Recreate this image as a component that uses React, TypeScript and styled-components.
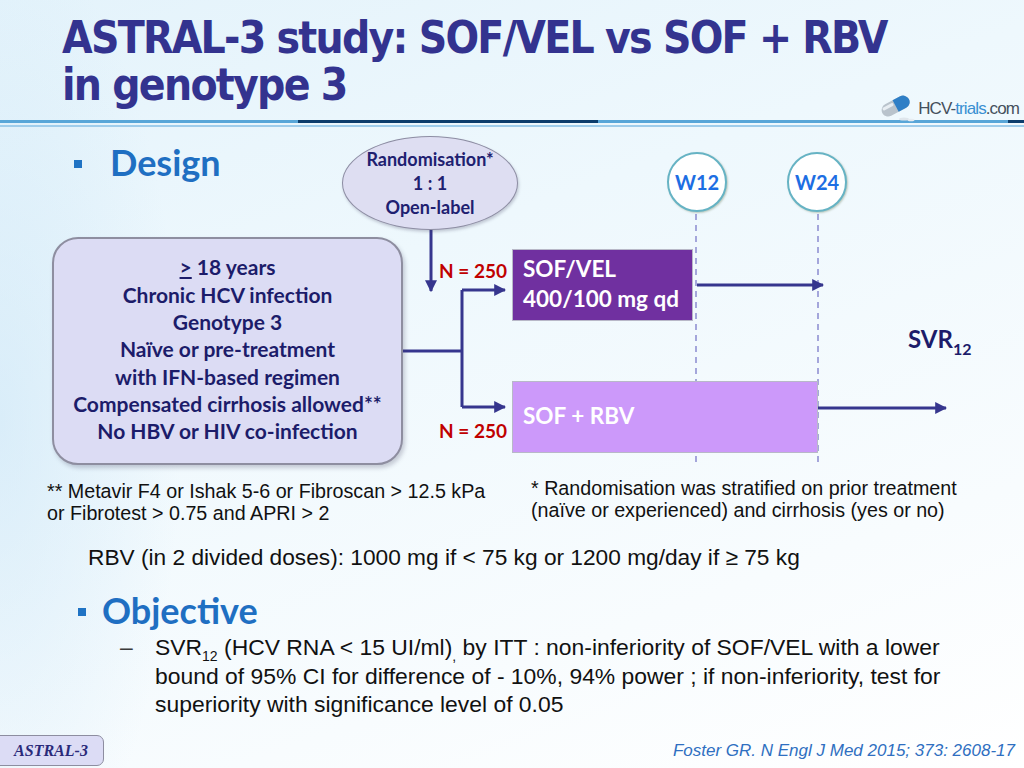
import styled, { createGlobalStyle } from 'styled-components';

const GlobalStyle = createGlobalStyle`
  html, body {
    margin: 0;
    padding: 0;
    background: #ffffff;
  }
`;

const NAVY = '#33338f';
const LINE = '#36368e';

const App = () => {
    return (
        <>
            <GlobalStyle />
            <Slide>
                <Header>
                    <Title>
                        ASTRAL-3 study: SOF/VEL vs SOF + RBV
                        <br />
                        in genotype 3
                    </Title>
                    <Rule>
                        <RuleTop />
                        <RuleBottom />
                    </Rule>
                    <Logo>
                        <PillIcon />
                        <LogoText>
                            HCV-<LogoAccent>trials</LogoAccent>.com
                        </LogoText>
                    </Logo>
                </Header>

                <DesignCanvas>
                    <SectionHeading>
                        <Bullet />
                        Design
                    </SectionHeading>

                    <Connectors />

                    <Ellipse>
                        <span>Randomisation*</span>
                        <span>1 : 1</span>
                        <span>Open-label</span>
                    </Ellipse>

                    <WeekMark $left={667}>W12</WeekMark>
                    <WeekMark $left={787}>W24</WeekMark>

                    <Criteria>
                        <span><u>&gt;</u> 18 years</span>
                        <span>Chronic HCV infection</span>
                        <span>Genotype 3</span>
                        <span>Naïve or pre-treatment</span>
                        <span>with IFN-based regimen</span>
                        <span>Compensated cirrhosis allowed**</span>
                        <span>No HBV or HIV co-infection</span>
                    </Criteria>

                    <Count $top={133}>N = 250</Count>
                    <Count $top={293}>N = 250</Count>

                    <Arm $top={122} $width={181} $color="#7030a0">
                        <span>SOF/VEL</span>
                        <span>400/100 mg qd</span>
                    </Arm>
                    <Arm $top={254} $width={306} $color="#cc99fa">
                        <span>SOF + RBV</span>
                    </Arm>

                    <Outcome>
                        SVR<sub>12</sub>
                    </Outcome>
                </DesignCanvas>

                <Notes>
                    <Note $left={47} $shift={0}>
                        ** Metavir F4 or Ishak 5-6 or Fibroscan &gt; 12.5 kPa
                        <br />
                        or Fibrotest &gt; 0.75 and APRI &gt; 2
                    </Note>
                    <Note $left={531} $shift={-3}>
                        * Randomisation was stratified on prior treatment
                        <br />
                        (naïve or experienced) and cirrhosis (yes or no)
                    </Note>
                </Notes>

                <Dosing>RBV (in 2 divided doses): 1000 mg if &lt; 75 kg or 1200 mg/day if ≥ 75 kg</Dosing>

                <ObjectiveHeading>
                    <Bullet />
                    Objective
                </ObjectiveHeading>

                <DashList>
                    <DashItem>
                        SVR<sub>12</sub> (HCV RNA &lt; 15 UI/ml)<sub>,</sub> by ITT : non-inferiority of SOF/VEL with a lower
                        <br />
                        bound of 95% CI for difference of - 10%, 94% power ; if non-inferiority, test for
                        <br />
                        superiority with significance level of 0.05
                    </DashItem>
                </DashList>

                <Footer>
                    <StudyTag>ASTRAL-3</StudyTag>
                    <Citation>Foster GR. N Engl J Med 2015; 373: 2608-17</Citation>
                </Footer>
            </Slide>
        </>
    )
}

export default App

const Connectors = () => (
    <Lines viewBox="0 0 1024 347" width={1024} height={347}>
        <defs>
            <marker id="head" viewBox="0 0 10 10" refX="9" refY="5" markerWidth="4" markerHeight="4" orient="auto">
                <path d="M0 0 L10 5 L0 10 z" fill={LINE} />
            </marker>
        </defs>
        <g stroke="#8b8bd0" strokeWidth="1.5" strokeDasharray="6 5" fill="none">
            <line x1="696" y1="87" x2="696" y2="339" />
            <line x1="818" y1="87" x2="818" y2="339" />
        </g>
        <g stroke={LINE} strokeWidth="3" fill="none">
            <line x1="431" y1="103" x2="431" y2="164" markerEnd="url(#head)" />
            <line x1="403" y1="224" x2="462" y2="224" />
            <polyline points="462,163 462,280" />
            <line x1="462" y1="163" x2="505" y2="163" markerEnd="url(#head)" />
            <line x1="462" y1="280" x2="505" y2="280" markerEnd="url(#head)" />
            <line x1="697" y1="158" x2="823" y2="158" markerEnd="url(#head)" />
            <line x1="818" y1="281" x2="946" y2="281" markerEnd="url(#head)" />
        </g>
    </Lines>
);

const PillIcon = () => (
    <svg width="38" height="28" viewBox="0 0 38 28">
        <g transform="rotate(-28 17 12)">
            <rect x="3" y="5" width="30" height="13" rx="6.5" fill="#b9c3cc" />
            <path d="M18 5 H26.5 A6.5 6.5 0 0 1 26.5 18 H18 z" fill="#2f7fc6" />
            <rect x="5" y="7" width="12" height="3" rx="1.5" fill="#e8eef3" />
        </g>
        <ellipse cx="26" cy="24" rx="5" ry="1.6" fill="#dfe6ec" />
        <ellipse cx="33" cy="25" rx="3.5" ry="1.3" fill="#e6ecf1" />
    </svg>
);

const Slide = styled.div`
  position: relative;
  width: 1024px;
  height: 768px;
  overflow: hidden;
  display: flex;
  flex-direction: column;
  background:
    radial-gradient(ellipse 260px 700px at 0px 420px, rgba(200, 228, 246, 0.55), rgba(255, 255, 255, 0) 70%),
    linear-gradient(160deg, #e4f3fb 0%, #eef8fd 35%, #f8fcfe 75%, #ffffff 100%);
  font-family: "Liberation Sans", Arial, sans-serif;
  color: #111;
`;

const Header = styled.header`
  position: relative;
  display: flex;
  flex-direction: column;
  padding-top: 14px;
`;

const Title = styled.h1`
  margin: 0 0 0 62px;
  font-family: "DejaVu Sans Condensed", "DejaVu Sans", sans-serif;
  font-stretch: condensed;
  font-weight: 700;
  font-size: 44px;
  line-height: 47px;
  letter-spacing: -1.75px;
  color: ${NAVY};
`;

const Rule = styled.div`
  margin-top: 12px;
  display: flex;
  flex-direction: column;
  gap: 2px;
`;

const RuleTop = styled.div`
  height: 3px;
  background: linear-gradient(
    90deg,
    #58a6d8 0px,
    #58a6d8 298px,
    #0c3d6c 298px,
    #0c3d6c 598px,
    #58a6d8 598px,
    #58a6d8 1008px,
    #0c3d6c 1008px
  );
`;

const RuleBottom = styled.div`
  height: 2px;
  background: #9fcdeb;
`;

const Logo = styled.div`
  position: absolute;
  right: 5px;
  top: 95px;
  display: flex;
  align-items: center;
  gap: 2px;
`;

const LogoText = styled.span`
  font-family: "Liberation Sans", Arial, sans-serif;
  font-size: 17px;
  letter-spacing: -0.9px;
  color: #45505c;
`;

const LogoAccent = styled.span`
  color: #3a8fd2;
`;

const DesignCanvas = styled.section`
  position: relative;
  height: 347px;
`;

const Lines = styled.svg`
  position: absolute;
  left: 0;
  top: 0;
`;

const Bullet = styled.span`
  display: inline-block;
  width: 8px;
  height: 8px;
  background: #1f73c4;
  margin-right: 28px;
  position: relative;
  top: -8px;
`;

const SectionHeading = styled.h2`
  margin: 0;
  padding: 15px 0 0 74px;
  font-family: Lato, "Open Sans", sans-serif;
  font-weight: 700;
  font-size: 36px;
  line-height: 40px;
  color: #1f6fc2;
`;

const ObjectiveHeading = styled(SectionHeading)`
  padding: 0 0 0 78px;
  margin-top: 20px;

  ${Bullet} {
    margin-right: 16px;
  }
`;

const Ellipse = styled.div`
  position: absolute;
  left: 342px;
  top: 9px;
  width: 176px;
  height: 94px;
  box-sizing: border-box;
  border-radius: 50%;
  border: 1.5px solid #8d8da3;
  background: #dedef2;
  box-shadow: 1px 2px 3px rgba(60, 60, 90, 0.25);
  display: flex;
  flex-direction: column;
  align-items: center;
  justify-content: center;
  font-family: Lato, "Open Sans", sans-serif;
  font-weight: 700;
  font-size: 18px;
  line-height: 24px;
  color: #202070;
`;

const WeekMark = styled.div<{ $left: number }>`
  position: absolute;
  left: ${p => p.$left}px;
  top: 25px;
  width: 60px;
  height: 60px;
  box-sizing: border-box;
  border-radius: 50%;
  border: 2px solid #66b3c4;
  background: #ffffff;
  box-shadow: 1px 1px 2px rgba(120, 140, 110, 0.45);
  display: flex;
  align-items: center;
  justify-content: center;
  font-family: Lato, "Open Sans", sans-serif;
  font-weight: 700;
  font-size: 20px;
  color: #1d6ee3;
`;

const Criteria = styled.div`
  position: absolute;
  left: 52px;
  top: 110px;
  width: 351px;
  height: 228px;
  box-sizing: border-box;
  border: 2px solid #8e8ea0;
  border-radius: 26px;
  background: #dcdcf4;
  box-shadow: 2px 3px 4px rgba(60, 60, 90, 0.25);
  display: flex;
  flex-direction: column;
  align-items: center;
  justify-content: center;
  padding-bottom: 4px;
  font-family: Lato, "Open Sans", sans-serif;
  font-weight: 700;
  font-size: 21px;
  line-height: 27.3px;
  color: #1c1c6a;
  white-space: nowrap;
`;

const Count = styled.div<{ $top: number }>`
  position: absolute;
  left: 439px;
  top: ${p => p.$top}px;
  font-family: Lato, "Open Sans", sans-serif;
  font-weight: 700;
  font-size: 19px;
  line-height: 22px;
  color: #c00000;
`;

const Arm = styled.div<{ $top: number; $width: number; $color: string }>`
  position: absolute;
  left: 512px;
  top: ${p => p.$top}px;
  width: ${p => p.$width}px;
  height: 72px;
  box-sizing: border-box;
  border: 1.5px solid #b8b8c8;
  background: ${p => p.$color};
  display: flex;
  flex-direction: column;
  justify-content: center;
  padding: 0 0 2px 10px;
  font-family: Lato, "Open Sans", sans-serif;
  font-weight: 700;
  font-size: 22.5px;
  line-height: 30px;
  color: #ffffff;
`;

const Outcome = styled.div`
  position: absolute;
  left: 908px;
  top: 198px;
  font-family: Lato, "Open Sans", sans-serif;
  font-weight: 700;
  font-size: 24px;
  line-height: 28px;
  color: #1c1c6a;

  sub {
    font-size: 16px;
    vertical-align: -7px;
    line-height: 0;
  }
`;

const Notes = styled.div`
  position: relative;
  height: 46px;
  margin-top: 6px;
`;

const Note = styled.p<{ $left: number; $shift: number }>`
  position: absolute;
  left: ${p => p.$left}px;
  top: ${p => p.$shift}px;
  margin: 0;
  font-size: 19.7px;
  line-height: 22px;
  color: #111;
  white-space: nowrap;
`;

const Dosing = styled.p`
  margin: 18px 0 0 88px;
  font-size: 22.7px;
  line-height: 26px;
  color: #111;
`;

const DashList = styled.ul`
  list-style: none;
  margin: 3px 0 0 0;
  padding: 0 0 0 155px;
`;

const DashItem = styled.li`
  position: relative;
  font-size: 22.9px;
  line-height: 28.5px;
  color: #111;
  white-space: nowrap;

  &::before {
    content: '–';
    position: absolute;
    left: -35px;
    top: 0;
    color: #3a3a3a;
  }

  sub {
    font-size: 14px;
    line-height: 0;
  }
`;

const Footer = styled.footer`
  margin-top: auto;
  display: flex;
  align-items: center;
  justify-content: space-between;
  padding: 0 9px 2px 0;
`;

const StudyTag = styled.div`
  width: 106px;
  height: 31px;
  box-sizing: border-box;
  margin-left: -2px;
  border: 1.5px solid #8d8da0;
  border-radius: 0 7px 7px 0;
  background: #dcdcf5;
  display: flex;
  align-items: center;
  justify-content: center;
  font-family: "Liberation Serif", "DejaVu Serif", serif;
  font-style: italic;
  font-weight: 700;
  font-size: 16px;
  color: #2a2a7a;
`;

const Citation = styled.div`
  font-style: italic;
  font-size: 17px;
  color: #2f6fc1;
`;
